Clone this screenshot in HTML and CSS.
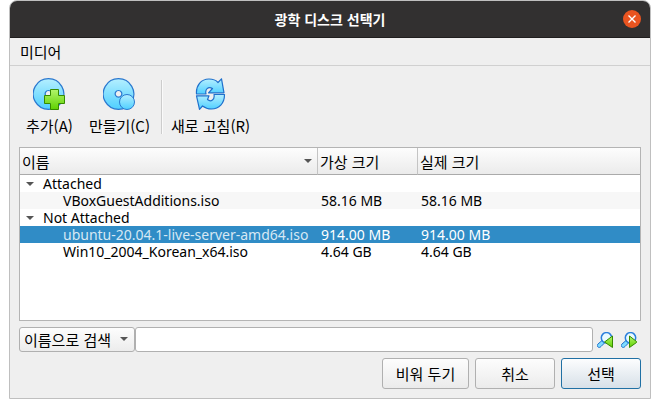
FILE: index.html
```html
<!DOCTYPE html>
<html lang="ko">
<head>
<meta charset="utf-8">
<title>광학 디스크 선택기</title>
<link rel="stylesheet" href="styles.css">
</head>
<body>
<svg class="defs" aria-hidden="true">
  <defs>
    <linearGradient id="blue" x1="0" y1="0" x2="0" y2="1"><stop offset="0" stop-color="#b4efff"/><stop offset="1" stop-color="#4fcfff"/></linearGradient>
    <linearGradient id="green" x1="0" y1="0" x2="0" y2="1"><stop offset="0" stop-color="#b2f56c"/><stop offset="1" stop-color="#5fd100"/></linearGradient>
  </defs>
</svg>
<main class="window">
  <header class="titlebar">
    <h1 class="title">광학 디스크 선택기</h1>
    <button class="close" type="button" aria-label="닫기">
      <svg width="8" height="8" viewBox="0 0 8 8"><path d="M0.5 0.5 7.5 7.5M7.5 0.5 0.5 7.5" stroke="#fff" stroke-width="1.4"/></svg>
    </button>
  </header>
  <nav class="menubar"><button class="menu" type="button">미디어</button></nav>
  <div class="toolbar">
    <button class="tool" type="button">
      <svg width="32" height="32" viewBox="0 0 32 32">
        <path fill-rule="evenodd" d="M15.500 .7a15.300 15.300 0 1 0 .01 0zM15.500 12.500a3.300 3.300 0 1 1-.01 0z" fill="url(#blue)" stroke="#2a78cf" stroke-width="1.2"/>
        <path d="M17.500 11.500h8v6h6v8h-6v6h-8v-6h-6v-8h6z" fill="url(#green)" stroke="#368a00"/>
      </svg>
      <span>추가(A)</span>
    </button>
    <button class="tool" type="button">
      <svg width="32" height="32" viewBox="0 0 32 32">
        <path fill-rule="evenodd" d="M15.500 .7a15.300 15.300 0 1 0 .01 0zM15.500 12.500a3.300 3.300 0 1 1-.01 0z" fill="url(#blue)" stroke="#2a78cf" stroke-width="1.2"/>
        <circle cx="24" cy="24" r="7.500" fill="url(#blue)" stroke="#2a78cf"/>
      </svg>
      <span>만들기(C)</span>
    </button>
    <span class="separator"></span>
    <button class="tool" type="button">
      <svg width="32" height="32" viewBox="0 0 32 32">
        <g fill="url(#blue)" stroke="#1f70cc" stroke-width="1.2" stroke-linejoin="round">
          <path d="M1.500 16C.8 7.500 6 1 14 1c4 0 7 1.200 9 3.500L26.500.8 29 14.800H13.500L17.500 10.500C13 8 9.800 11.500 11 16z"/>
          <path d="M29.500 16.500C29.500 25.500 24 31 16.500 31c-4 0-6.500-1-9-3L4.500 31.300 1.500 17.800H14L12.500 21.500C16 24.500 20 21.500 19 16.500z"/>
        </g>
      </svg>
      <span>새로 고침(R)</span>
    </button>
  </div>
  <section class="content">
    <div class="list">
      <table class="media">
        <colgroup><col class="col-name"><col class="col-size"><col></colgroup>
        <thead>
          <tr><th><span class="sort">이름<i class="arrow"></i></span></th><th>가상 크기</th><th>실제 크기</th></tr>
        </thead>
        <tbody>
          <tr><td class="group" colspan="3"><i class="arrow"></i>Attached</td></tr>
          <tr class="alt"><td class="item">VBoxGuestAdditions.iso</td><td>58.16 MB</td><td>58.16 MB</td></tr>
          <tr><td class="group" colspan="3"><i class="arrow"></i>Not Attached</td></tr>
          <tr class="selected"><td class="item">ubuntu-20.04.1-live-server-amd64.iso</td><td>914.00 MB</td><td>914.00 MB</td></tr>
          <tr><td class="item">Win10_2004_Korean_x64.iso</td><td>4.64 GB</td><td>4.64 GB</td></tr>
        </tbody>
      </table>
    </div>
    <form class="search">
      <div class="combo">
        <select class="select" aria-label="검색 기준"><option>이름으로 검색</option></select>
        <i class="arrow"></i>
      </div>
      <input class="query" type="text" aria-label="검색어">
      <button class="step" type="button" aria-label="이전 찾기">
        <svg width="16" height="16" viewBox="0 0 16 16">
          <path d="M1 15C0 14 0 13 1 12L5 8.500 7.500 11 4 14.500C3 15.500 2 15.800 1 15z" fill="#7fdcff" stroke="#1f70cc"/>
          <circle cx="9.500" cy="5.800" r="5.200" fill="#e9faff" stroke="#2a7fdc" stroke-width="1.500"/>
          <path d="M15.500 4v11.500L7.500 10z" fill="url(#green)" stroke="#368a00" stroke-linejoin="round"/>
        </svg>
      </button>
      <button class="step" type="button" aria-label="다음 찾기">
        <svg width="16" height="16" viewBox="0 0 16 16">
          <path d="M1 15C0 14 0 13 1 12L5 8.500 7.500 11 4 14.500C3 15.500 2 15.800 1 15z" fill="#7fdcff" stroke="#1f70cc"/>
          <circle cx="9.500" cy="5.800" r="5.200" fill="#e9faff" stroke="#2a7fdc" stroke-width="1.500"/>
          <path d="M8.500 4v11.500L15.500 10.500v-1z" fill="url(#green)" stroke="#368a00" stroke-linejoin="round"/>
        </svg>
      </button>
    </form>
    <footer class="actions">
      <button class="button wide" type="button">비워 두기</button>
      <button class="button" type="button">취소</button>
      <button class="button primary" type="button">선택</button>
    </footer>
  </section>
</main>
</body>
</html>
```
FILE: styles.css
```css
* { box-sizing: border-box; }
body {
  margin: 0;
  background: #fff;
  color: #000;
  font: 15px/17px "Noto Sans CJK KR", sans-serif;
}
button, select, input { font: inherit; color: inherit; margin: 0; }
button { padding: 0; border: 0; background: none; }
svg { display: block; }
.defs { position: absolute; width: 0; height: 0; }

.window {
  display: flex;
  flex-direction: column;
  min-height: calc(100vh - 9px);
  margin: 0 9px 9px;
  border: 1px solid #bfbfbf;
  border-radius: 8px 8px 0 0;
  background: #efefef;
  overflow: hidden;
}
.titlebar {
  display: grid;
  grid-template-columns: 1fr auto 1fr;
  align-items: center;
  height: 37px;
  padding: 0 9px;
  background: #323030;
  border-bottom: 1px solid #201e1e;
}
.title { grid-column: 2; margin: 0; color: #fff; font-size: 14px; font-weight: 700; }
.close {
  display: grid;
  place-items: center;
  justify-self: end;
  width: 18px;
  height: 18px;
  border-radius: 50%;
  background: #e95420;
}
.menubar { display: flex; height: 28px; padding: 0 10px; border-bottom: 1px solid #d0d0d0; }

.toolbar { display: flex; align-items: flex-start; padding: 12px 16px; }
.tool { display: flex; flex-direction: column; align-items: center; gap: 7px; white-space: nowrap; }
.tool + .tool { margin-left: 16px; }
.separator { width: 2px; height: 54px; margin: 2px 8px 1px 11px; border-left: 1px solid #cdcdcd; background: #fafafa; }

.content { display: flex; flex: 1; flex-direction: column; padding: 0 9px 9px; }
.list { flex: 1; border: 1px solid #b4b4b4; background: #fff; }
.media { width: 100%; table-layout: fixed; border-collapse: separate; border-spacing: 0; }
.col-name { width: 298px; }
.col-size { width: 100px; }
th {
  height: 27px;
  padding: 0 2px;
  border-bottom: 1px solid #aaa;
  border-right: 1px solid #c4c4c4;
  background: linear-gradient(#fdfdfd, #ebebeb);
  font-weight: 400;
  text-align: left;
}
th:last-child { border-right: 0; }
.sort { display: flex; align-items: center; justify-content: space-between; padding-right: 3px; }
td {
  height: 17px;
  padding: 0 3px;
  font-family: "Noto Sans", sans-serif;
  font-size: 14px;
  white-space: nowrap;
}
.group .arrow { display: inline-block; margin: 0 9px 3px 3px; }
.item { padding-left: 43px; padding-right: 0; }
.alt td { background: #f7f7f7; }
.selected td { background: #308cc6; color: #fff; }
.selected .item { color: #d6e8f4; }
.arrow {
  width: 0;
  height: 0;
  border: 4px solid transparent;
  border-top-color: #555;
  border-bottom: 0;
}

.search { display: flex; align-items: center; margin: 6px 0; }
.combo { position: relative; }
.combo .arrow { position: absolute; right: 7px; top: 10px; pointer-events: none; }
.select {
  display: block;
  appearance: none;
  width: 116px;
  height: 25px;
  padding: 0 4px;
  border: 1px solid #b0b0b0;
  border-radius: 3px;
  background: linear-gradient(#fdfdfd, #ececec);
}
.query { flex: 1; min-width: 0; height: 25px; border: 1px solid #b0b0b0; border-radius: 3px; background: #fff; }
.step { margin: 0 4px; }

.actions { display: flex; justify-content: flex-end; gap: 6px; }
.button {
  width: 80px;
  height: 31px;
  border: 1px solid #b0b0b0;
  border-radius: 3px;
  background: linear-gradient(#fdfdfd, #ebebeb);
}
.wide { width: 87px; }
.primary { border-color: #2070a4; background: linear-gradient(#fcfdfe, #d7e0e8); }
```
